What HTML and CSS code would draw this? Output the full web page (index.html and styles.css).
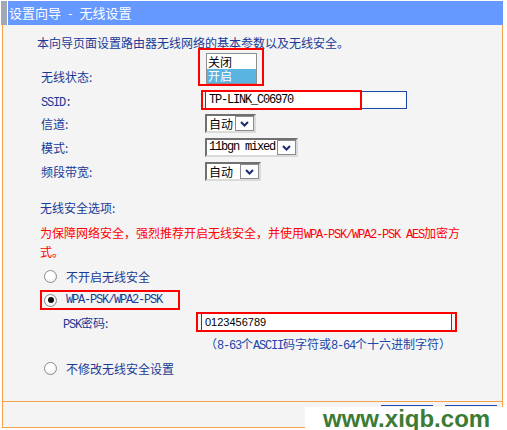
FILE: index.html
```html
<!DOCTYPE html>
<html>
  <head>
    <meta charset="utf-8">
    <title>设置向导 - 无线设置</title>
    <link rel="stylesheet" href="styles.css">
  </head>
  <body>
    <div class="page">
      <div class="head">
        <span class="head-mark"></span>
        <div class="head-title">设置向导<span class="dash">-</span>无线设置</div>
      </div>

      <div class="panel">
        <p class="intro">本向导页面设置路由器无线网络的基本参数以及无线安全。</p>

        <div class="row row-status">
          <span class="label">无线状态:</span>
          <div class="listbox">
            <div class="opt">关闭</div>
            <div class="opt selected">开启</div>
          </div>
        </div>

        <div class="row row-input">
          <span class="label"><span class="en">SSID:</span></span>
          <input class="text-input ssid" type="text" value="TP-LINK_C06970" readonly>
        </div>

        <div class="row row-select">
          <span class="label">信道:</span>
          <div class="select select-channel">
            <span class="select-value">自动</span>
            <span class="select-btn">
              <svg width="9" height="6" viewBox="0 0 9 6"><path d="M1 1 L4.5 4.5 L8 1" fill="none" stroke="#1d2b6e" stroke-width="2"/></svg>
            </span>
          </div>
        </div>

        <div class="row row-select">
          <span class="label">模式:</span>
          <div class="select select-mode">
            <span class="select-value en">11bgn mixed</span>
            <span class="select-btn">
              <svg width="9" height="6" viewBox="0 0 9 6"><path d="M1 1 L4.5 4.5 L8 1" fill="none" stroke="#1d2b6e" stroke-width="2"/></svg>
            </span>
          </div>
        </div>

        <div class="row row-select">
          <span class="label">频段带宽:</span>
          <div class="select select-width">
            <span class="select-value">自动</span>
            <span class="select-btn">
              <svg width="9" height="6" viewBox="0 0 9 6"><path d="M1 1 L4.5 4.5 L8 1" fill="none" stroke="#1d2b6e" stroke-width="2"/></svg>
            </span>
          </div>
        </div>

        <div class="section-title">无线安全选项:</div>
        <div class="warning">为保障网络安全，强烈推荐开启无线安全，并使用<span class="en">WPA-PSK/WPA2-PSK AES</span>加密方式。</div>

        <div class="radio-row first">
          <span class="radio"></span>
          <span class="radio-text">不开启无线安全</span>
        </div>
        <div class="radio-row">
          <span class="radio checked"></span>
          <span class="radio-text en">WPA-PSK/WPA2-PSK</span>
        </div>

        <div class="psk-row">
          <span class="psk-label"><span class="en">PSK</span>密码:</span>
          <input class="text-input psk" type="text" value="0123456789" readonly>
        </div>
        <div class="hint">（<span class="en">8-63</span>个<span class="en">ASCII</span>码字符或<span class="en">8-64</span>个十六进制字符）</div>

        <div class="radio-row last">
          <span class="radio"></span>
          <span class="radio-text">不修改无线安全设置</span>
        </div>
      </div>

      <div class="foot">
        <span class="btn"></span>
        <span class="btn"></span>
      </div>

      <!-- red annotation boxes drawn over the form -->
      <div class="mark mark-status"></div>
      <div class="mark mark-ssid"></div>
      <div class="mark mark-wpa"></div>
      <div class="mark mark-psk"></div>

      <div class="watermark">www.xiqb.com</div>
    </div>
  </body>
</html>
```

FILE: styles.css
```css
body {
  margin: 0;
  background: #fff;
  font-family: "Noto Sans CJK SC", sans-serif;
  font-size: 12px;
  color: #1a3a94;
}

.page {
  position: relative;
  width: 507px;
  height: 430px;
  overflow: hidden;
}

.en {
  font-family: "Liberation Mono", "Noto Sans CJK SC", monospace;
  font-size: 12px;
  letter-spacing: -1.2px;
  line-height: 12px;
}

/* header */
.head {
  display: flex;
  height: 24px;
  margin-top: 1px;
}

.head-mark {
  width: 6px;
  margin-left: 1px;
  margin-right: 1px;
  background: #a2a8b6;
}

.head-title {
  flex: 1;
  margin-right: 4px;
  padding-left: 1px;
  background: #6699ff;
  color: #fff;
  line-height: 24px;
  font-size: 13px;
}

.head-title .dash {
  margin: 0 7px;
}

/* main panel */
.panel {
  box-sizing: border-box;
  height: 377px;
  margin: 0 4px 0 2px;
  padding: 9px 0 0 34px;
  background: #f4f4f4;
  border: 1px solid #f5a04a;
  border-top: none;
}

.intro {
  margin: 0;
  line-height: 18px;
}

.row {
  display: flex;
  align-items: center;
}

.label {
  box-sizing: border-box;
  width: 168px;
  padding-left: 4px;
  flex-shrink: 0;
}

.row-status {
  height: 31px;
  margin-top: 1px;
  align-items: flex-end;
}

.row-status .label {
  line-height: 14px;
}

.listbox {
  box-sizing: border-box;
  width: 51px;
  height: 31px;
  margin-left: 1px;
  padding-top: 1px;
  border: 1px solid #8e8e8e;
  background: #fff;
  color: #000;
}

.opt {
  height: 14px;
  line-height: 14px;
  padding-left: 1px;
}

.opt.selected {
  background: #5ab4e2;
  color: #fff;
}

.row-input {
  height: 18px;
  margin-top: 7px;
}

.text-input {
  box-sizing: border-box;
  height: 18px;
  margin: 0;
  border: 1px solid #1f44a8;
  background: #fff;
  color: #000;
  outline: none;
}

.ssid {
  width: 202px;
  padding: 0 0 0 3px;
  font-family: "Liberation Mono", monospace;
  font-size: 12px;
  letter-spacing: -1.2px;
}

.row-select {
  height: 19px;
  margin-top: 5px;
}

.select {
  box-sizing: border-box;
  display: flex;
  height: 19px;
  border: 2px solid;
  border-color: #707070 #dadada #dadada #707070;
  background: #fff;
  color: #000;
}

.select-value {
  flex: 1;
  padding-left: 2px;
  line-height: 15px;
  white-space: nowrap;
}

.select-btn {
  box-sizing: border-box;
  display: flex;
  align-items: center;
  justify-content: center;
  width: 19px;
  border: 1px solid #8c8c8c;
  background: #fdfdfd;
}

.select-channel {
  width: 51px;
}

.select-mode {
  width: 93px;
}

.select-width {
  width: 56px;
}

.section-title {
  margin-top: 18px;
  padding-left: 3px;
  line-height: 18px;
}

.warning {
  width: 425px;
  height: 38px;
  margin-top: 6px;
  padding-left: 3px;
  line-height: 19px;
  color: #ff0000;
}

.radio-row {
  display: flex;
  align-items: center;
  gap: 9px;
  height: 20px;
  margin-top: 4px;
  padding-left: 7px;
}

.radio-row.first {
  margin-top: 5px;
}

.radio-row.last {
  margin-top: 5px;
}

.radio {
  box-sizing: border-box;
  display: flex;
  align-items: center;
  justify-content: center;
  width: 13px;
  height: 13px;
  border: 1px solid #8a8a8a;
  border-radius: 50%;
  background: radial-gradient(circle at 40% 35%, #fff 40%, #e4e4e4 100%);
}

.radio.checked::after {
  content: "";
  width: 6px;
  height: 6px;
  border-radius: 50%;
  background: #111;
}

.psk-row {
  display: flex;
  align-items: center;
  height: 18px;
  margin-top: 3px;
  padding-left: 26px;
}

.psk-label {
  width: 138px;
  flex-shrink: 0;
}

.psk {
  width: 251px;
  padding: 0 0 0 3px;
  font-family: "Liberation Sans", sans-serif;
  font-size: 11px;
}

.hint {
  height: 18px;
  margin-top: 4px;
  padding-left: 168px;
  line-height: 18px;
  color: #2048a8;
}

/* footer strip with buttons */
.foot {
  box-sizing: border-box;
  display: flex;
  justify-content: flex-end;
  gap: 12px;
  height: 26px;
  margin: 0 4px 0 2px;
  padding: 3px 5px 0 0;
  background: #f4f4f4;
  border: 1px solid #f5a04a;
  border-top: none;
}

.btn {
  width: 52px;
  height: 20px;
  border-top: 1px solid #2346b5;
}

/* overlays */
.mark {
  position: absolute;
  box-sizing: border-box;
  border: 2px solid #f00;
}

.mark-status {
  left: 198px;
  top: 48px;
  width: 66px;
  height: 38px;
}

.mark-ssid {
  left: 201px;
  top: 90px;
  width: 161px;
  height: 20px;
}

.mark-wpa {
  left: 40px;
  top: 290px;
  width: 140px;
  height: 20px;
}

.mark-psk {
  left: 196px;
  top: 312px;
  width: 261px;
  height: 20px;
}

.watermark {
  position: absolute;
  left: 305px;
  top: 407px;
  width: 202px;
  height: 23px;
  padding-left: 18px;
  box-sizing: border-box;
  background: #fff;
  color: #3b7b34;
  font-family: "Liberation Sans", sans-serif;
  font-weight: bold;
  font-size: 24px;
  line-height: 23px;
  white-space: nowrap;
}
```
